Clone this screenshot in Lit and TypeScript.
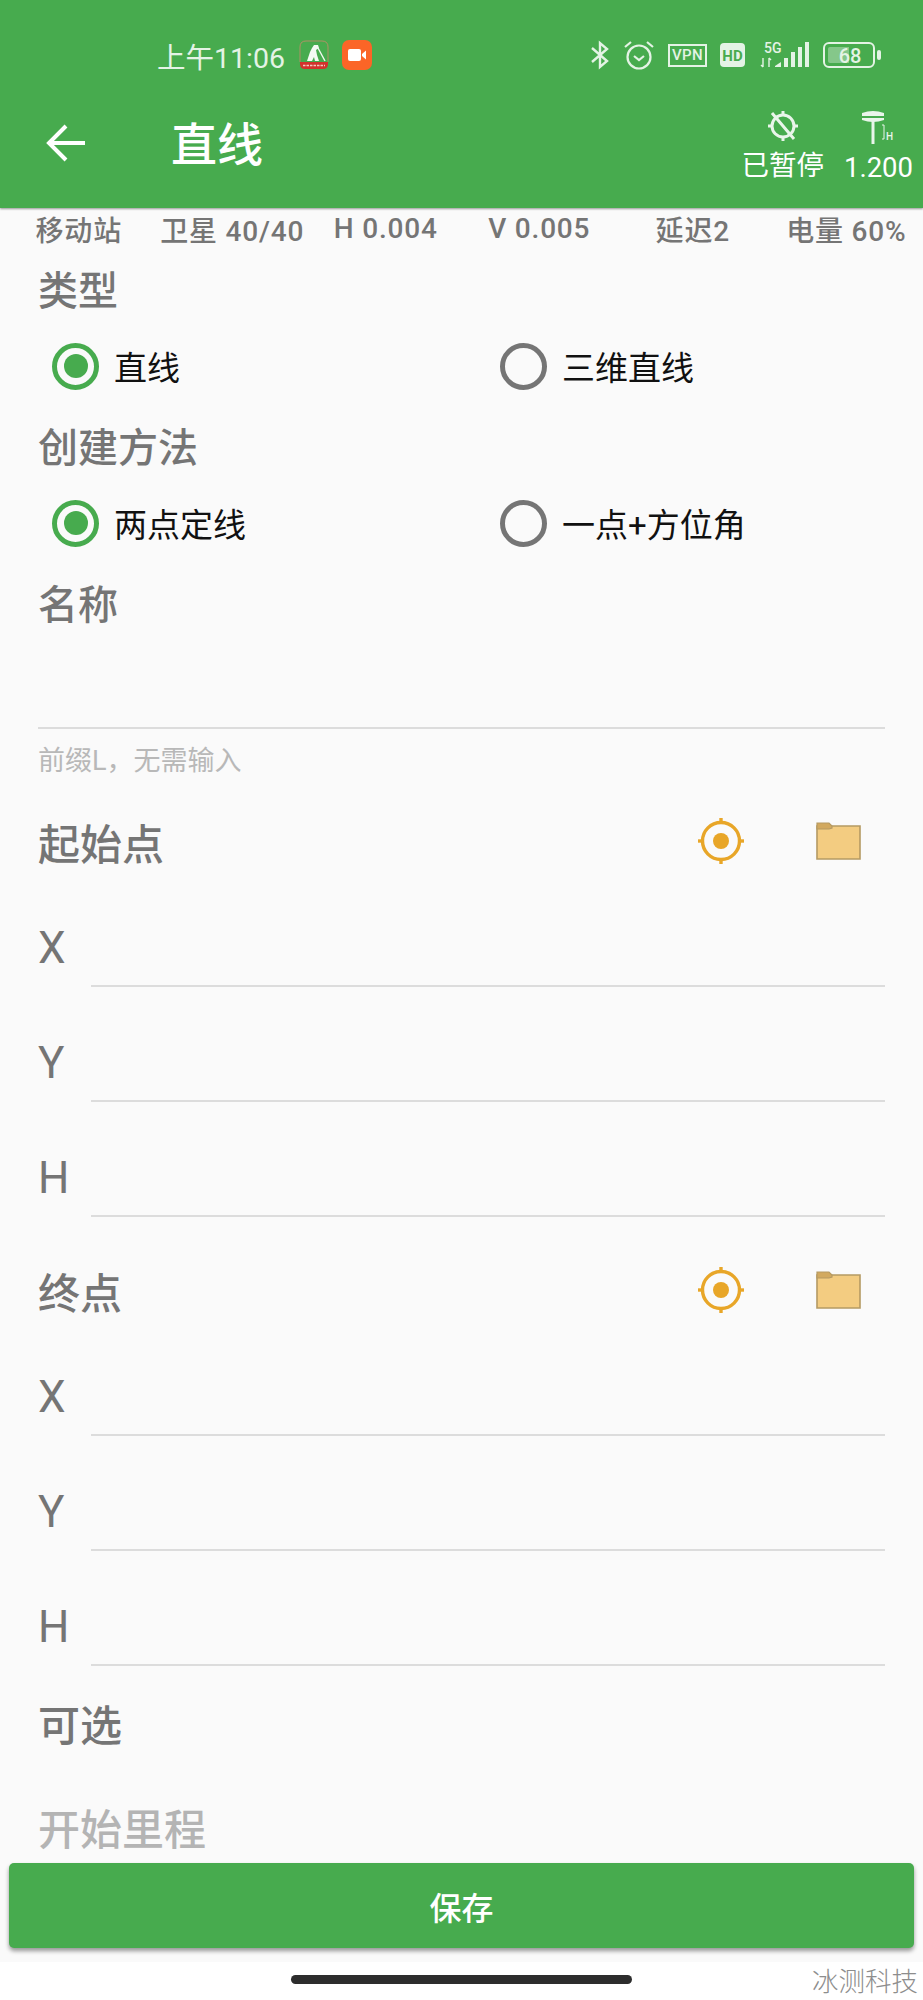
import { LitElement, html, css, svg } from 'lit';
import { customElement } from 'lit/decorators.js';

const targetIcon = html`<svg class="tool" width="46" height="46" viewBox="0 0 46 46">
  <circle cx="23" cy="23" r="18.5" fill="none" stroke="#e8a628" stroke-width="3.4"></circle>
  <circle cx="23" cy="23" r="8" fill="#e8a628"></circle>
  ${[[23, 0, 23, 6], [23, 40, 23, 46], [0, 23, 6, 23], [40, 23, 46, 23]].map(
    ([a, b, c, d]) => svg`<line x1=${a} y1=${b} x2=${c} y2=${d} stroke="#e8a628" stroke-width="3.4"></line>`
  )}
</svg>`;

const folderIcon = html`<svg class="tool" width="45" height="38" viewBox="0 0 45 38">
  <path d="M1 4H44V37H1Z" fill="#f3cc81" stroke="#b59a63" stroke-width="1.6"></path>
  <path d="M1 1H13L16 4V6L13 7H1Z" fill="#d2a95f" stroke="#b59a63" stroke-width="1.2"></path>
</svg>`;

@customElement('app-root')
export class AppRoot extends LitElement {
  static styles = css`
    :host {
      display: flex;
      flex-direction: column;
      position: relative;
      height: 2000px;
      overflow: hidden;
      background: #fafafa;
      font-family: Roboto, "Noto Sans CJK SC", sans-serif;
    }
    .header {
      height: 208px;
      flex: none;
      background: #47ab4e;
      color: #fff;
      box-shadow: 0 1px 2px rgba(0, 0, 0, 0.4);
      position: relative;
    }
    .status {
      height: 58px;
      padding: 26px 41px 0 157px;
      display: flex;
      align-items: center;
      color: #e4f3e5;
    }
    .time {
      font-size: 28.5px;
      width: 142px;
      white-space: nowrap;
    }
    .status-left {
      display: flex;
      gap: 13px;
    }
    .status-right {
      margin-left: auto;
      display: flex;
      align-items: center;
      gap: 13px;
    }
    .signal {
      margin-left: 2px;
    }
    .vpn {
      width: 39px;
      height: 23px;
      border: 2px solid #e4f3e5;
      font-size: 15px;
      font-weight: 500;
      display: flex;
      align-items: center;
      justify-content: center;
      box-sizing: border-box;
      letter-spacing: 0.3px;
    }
    .toolbar {
      height: 124px;
      display: flex;
      align-items: center;
      padding-left: 46px;
      position: relative;
    }
    .back {
      margin-bottom: 6px;
    }
    .title {
      margin-left: 85px;
      margin-bottom: 2px;
      font-size: 46px;
      font-weight: 500;
      line-height: 1;
    }
    .actions {
      margin-left: auto;
      display: flex;
      padding-right: 10px;
      gap: 20px;
      align-self: flex-start;
      padding-top: 26px;
    }
    .action {
      display: flex;
      flex-direction: column;
      align-items: center;
      font-size: 27.5px;
      line-height: 34px;
      gap: 7px;
    }
    .stats {
      height: 41px;
      flex: none;
      display: grid;
      grid-template-columns: repeat(6, 1fr);
      align-items: center;
      text-align: center;
      font-size: 28px;
      letter-spacing: 0.8px;
      font-weight: 500;
      color: #757575;
      white-space: nowrap;
      padding-left: 2px;
    }
    .content {
      flex: 1;
      min-height: 0;
      padding: 0 38px;
      color: #757575;
    }
    .label {
      height: 77px;
      display: flex;
      align-items: center;
      font-size: 40px;
      font-weight: 500;
    }
    .radios {
      height: 80px;
      display: grid;
      grid-template-columns: 448px 1fr;
      align-items: center;
      padding-left: 14px;
    }
    .radio {
      display: flex;
      align-items: center;
      gap: 15px;
      font-size: 33px;
      color: #111;
    }
    .dot {
      width: 47px;
      height: 47px;
      box-sizing: border-box;
      border-radius: 50%;
      border: 5px solid #757575;
      display: flex;
      align-items: center;
      justify-content: center;
    }
    .on .dot {
      border-color: #47ab4e;
    }
    .on .dot::after {
      content: '';
      width: 24px;
      height: 24px;
      border-radius: 50%;
      background: #47ab4e;
    }
    .name {
      height: 78px;
    }
    .input {
      height: 88px;
      box-sizing: border-box;
      border-bottom: 2px solid #dcdcdc;
    }
    .hint {
      height: 58px;
      display: flex;
      align-items: center;
      font-size: 27px;
      color: #b8b8b8;
    }
    .section {
      display: flex;
      align-items: center;
      height: 58px;
      font-size: 42px;
      font-weight: 500;
    }
    .section.start {
      padding: 25px 0 2px;
    }
    .section.end {
      padding: 44px 0 2px;
    }
    .tools {
      margin-left: auto;
      display: flex;
      align-items: center;
      gap: 72px;
      padding-right: 24px;
    }
    .field {
      height: 115px;
      display: flex;
      align-items: flex-end;
      font-size: 44px;
      font-weight: 400;
    }
    .field span {
      width: 53px;
      flex: none;
      line-height: 54px;
      padding-bottom: 12px;
    }
    .field i {
      flex: 1;
      border-bottom: 2px solid #dcdcdc;
    }
    .optional {
      padding-top: 27px;
    }
    .placeholder {
      padding-top: 46px;
      color: #b4b4b4;
    }
    .footer {
      flex: none;
      height: 138px;
      box-sizing: border-box;
      display: flex;
      flex-direction: column;
      padding-top: 1px;
    }
    .save {
      height: 85px;
      margin: 0 9px;
      background: #47ab4e;
      border-radius: 5px;
      box-shadow: 0 3px 4px rgba(0, 0, 0, 0.4);
      color: #fff;
      font-size: 32px;
      font-weight: 500;
      display: flex;
      align-items: center;
      justify-content: center;
    }
    .nav {
      margin-top: 14px;
      flex: 1;
      background: #fff;
      display: flex;
      justify-content: center;
      padding-top: 13px;
    }
    .home {
      width: 341px;
      height: 9px;
      border-radius: 5px;
      background: #2d2d2d;
    }
    .mark {
      position: absolute;
      right: 5px;
      bottom: 2px;
      font-size: 26.5px;
      font-weight: 300;
      color: #8d8d8d;
      line-height: 32px;
    }
  `;

  field(name: string) {
    return html`<div class="field"><span>${name}</span><i></i></div>`;
  }

  radio(text: string, on: boolean) {
    return html`<div class="radio ${on ? 'on' : ''}"><div class="dot"></div>${text}</div>`;
  }

  render() {
    return html`
      <div class="header">
        <div class="status">
          <div class="time">上午11:06</div>
          <div class="status-left">
            <svg width="30" height="30" viewBox="0 0 30 30">
              <path d="M1 22V7Q1 1 7 1H23Q29 1 29 7V22" fill="none" stroke="#c98a6a" stroke-width="0.8"></path>
              <path d="M1 22H29V24Q29 29 24 29H6Q1 29 1 24Z" fill="#d3322c"></path>
              <path d="M4 25.5H26" stroke="#f3c9c0" stroke-width="1.6" stroke-dasharray="2.5 1"></path>
              <path d="M8 21L11 12L13 8L15 5L19 5L20 8L17 10L18 15L20 21L16 21L15 17L13 21Z" fill="#f4faf3"></path>
              <path d="M19 8L26 21" stroke="#f4faf3" stroke-width="1.4"></path>
            </svg>
            <svg width="30" height="30" viewBox="0 0 30 30">
              <rect width="30" height="30" rx="7" fill="#fb6527"></rect>
              <rect x="6" y="9" width="13" height="12" rx="2" fill="#fff"></rect>
              <path d="M20 14L24 10.5V19.5L20 16Z" fill="#fff"></path>
            </svg>
          </div>
          <div class="status-right">
            <svg width="20" height="30" viewBox="0 0 20 30" fill="none" stroke="#e4f3e5" stroke-width="2.4">
              <path d="M2 8L17 21L10 27V3L17 9L2 22"></path>
            </svg>
            <svg width="32" height="30" viewBox="0 0 32 30" fill="none" stroke="#e4f3e5" stroke-width="2.2">
              <circle cx="16" cy="17" r="11.5"></circle>
              <path d="M11 16L16 20L21 16M2 7L8 2M30 7L24 2"></path>
            </svg>
            <div class="vpn">VPN</div>
            <svg width="25" height="24" viewBox="0 0 25 24">
              <rect width="25" height="24" rx="4" fill="#e4f3e5"></rect>
              <text x="12.5" y="17.5" text-anchor="middle" font-size="15" font-weight="700" fill="#47ab4e">HD</text>
            </svg>
            <svg class="signal" width="50" height="28" viewBox="0 0 50 28" fill="#e4f3e5">
              <text x="4" y="12" font-size="14" font-weight="500">5G</text>
              <path d="M3 17V26M1 24L3 26M9 17V26M11 19L9 17" stroke="#e4f3e5" stroke-width="1.4" fill="none"></path>
              <path d="M15 25L21 21V26H15Z"></path>
              <rect x="24" y="17" width="4" height="9"></rect>
              <rect x="31" y="11" width="4" height="15"></rect>
              <rect x="38" y="6" width="4" height="20"></rect>
              <rect x="45" y="1" width="4" height="25"></rect>
            </svg>
            <svg width="59" height="26" viewBox="0 0 59 26">
              <rect x="1" y="1" width="50" height="24" rx="5" fill="none" stroke="#e4f3e5" stroke-width="2"></rect>
              <path d="M5 7Q5 5 7 5H26V21H7Q5 21 5 19Z" fill="#e4f3e5" opacity="0.4"></path>
              <rect x="54" y="8" width="4" height="10" rx="2" fill="#e4f3e5"></rect>
              <text x="27" y="20.5" text-anchor="middle" font-size="20" font-weight="500" fill="#e4f3e5">68</text>
            </svg>
          </div>
        </div>
        <div class="toolbar">
          <svg class="back" width="40" height="38" viewBox="0 0 40 38" fill="none" stroke="#fff" stroke-width="4">
            <path d="M39 19H4M20 2L3 19L20 36"></path>
          </svg>
          <div class="title">直线</div>
          <div class="actions">
            <div class="action">
              <svg width="32" height="32" viewBox="0 0 32 32" fill="none" stroke="#e9f5ea" stroke-width="3">
                <circle cx="16" cy="16" r="11"></circle>
                <path d="M16 1V5M16 27V31M1 16H5M27 16H31M5 3L27 29"></path>
              </svg>
              <span>已暂停</span>
            </div>
            <div class="action">
              <svg width="36" height="34" viewBox="0 0 36 34" fill="none" stroke="#e9f5ea">
                <path d="M2 3Q13 -1 24 3V6H2Z" fill="#e9f5ea" stroke="none"></path>
                <path d="M2 8H24V10Q13 14 2 10Z" fill="#e9f5ea" stroke="none"></path>
                <path d="M13 10V34" stroke-width="3"></path>
                <path d="M22 15H24V29H22" stroke-width="1"></path>
                <text x="26" y="30" font-size="10" font-weight="500" fill="#e9f5ea" stroke="none">H</text>
              </svg>
              <span>1.200</span>
            </div>
          </div>
        </div>
      </div>
      <div class="stats">
        <span>移动站</span><span>卫星 40/40</span><span>H 0.004</span><span>V 0.005</span><span>延迟2</span><span>电量 60%</span>
      </div>
      <div class="content">
        <div class="label">类型</div>
        <div class="radios">${this.radio('直线', true)}${this.radio('三维直线', false)}</div>
        <div class="label">创建方法</div>
        <div class="radios">${this.radio('两点定线', true)}${this.radio('一点+方位角', false)}</div>
        <div class="label name">名称</div>
        <div class="input"></div>
        <div class="hint">前缀L，无需输入</div>
        <div class="section start">起始点<div class="tools">${targetIcon}${folderIcon}</div></div>
        ${this.field('X')}${this.field('Y')}${this.field('H')}
        <div class="section end">终点<div class="tools">${targetIcon}${folderIcon}</div></div>
        ${this.field('X')}${this.field('Y')}${this.field('H')}
        <div class="section optional">可选</div>
        <div class="section placeholder">开始里程</div>
      </div>
      <div class="footer">
        <div class="save">保存</div>
        <div class="nav"><div class="home"></div></div>
      </div>
      <div class="mark">冰测科技</div>
    `;
  }
}
